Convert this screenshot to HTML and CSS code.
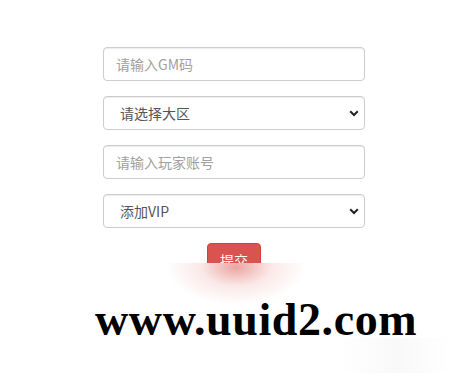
FILE: index.html
```html
<!DOCTYPE html>
<html lang="zh-CN">
<head>
<meta charset="utf-8">
<title>GM</title>
<link rel="stylesheet" href="styles.css">
</head>
<body>
<form class="gm-form">
  <input class="form-control" type="text" placeholder="请输入GM码">
  <div class="select-wrap">
    <select class="form-control select">
      <option>请选择大区</option>
    </select>
    <svg class="chev" width="10" height="7" viewBox="0 0 10 7"><path d="M1.2 1.3 L5 5 L8.8 1.3" fill="none" stroke="#222" stroke-width="2"/></svg>
  </div>
  <input class="form-control" type="text" placeholder="请输入玩家账号">
  <div class="select-wrap">
    <select class="form-control select">
      <option>添加VIP</option>
    </select>
    <svg class="chev" width="10" height="7" viewBox="0 0 10 7"><path d="M1.2 1.3 L5 5 L8.8 1.3" fill="none" stroke="#222" stroke-width="2"/></svg>
  </div>
  <div class="actions">
    <button type="button" class="btn-danger">提交</button>
  </div>
</form>
<div class="fade">
  <div class="watermark">www.uuid2.com</div>
</div>
</body>
</html>
```
FILE: styles.css
```css
html, body {
  margin: 0;
  padding: 0;
  background: #fff;
  width: 452px;
  height: 377px;
  overflow: hidden;
  position: relative;
  font-family: "Noto Sans CJK SC", "Noto Sans", sans-serif;
}

.gm-form {
  display: flex;
  flex-direction: column;
  gap: 15px;
  width: 262px;
  margin-left: 103px;
  padding-top: 47px;
}

.form-control {
  box-sizing: border-box;
  display: block;
  width: 100%;
  height: 34px;
  margin: 0;
  padding: 6px 12px;
  font-family: "Noto Sans CJK SC", "Noto Sans", sans-serif;
  font-size: 14px;
  line-height: 20px;
  color: #555;
  background: #fff;
  border: 1px solid #ccc;
  border-radius: 4px;
  box-shadow: inset 0 1px 1px rgba(0,0,0,.075);
  outline: none;
}

.form-control::placeholder {
  color: #a0a0a0;
}

.select-wrap {
  position: relative;
}

.select {
  appearance: none;
  -webkit-appearance: none;
  padding-left: 16px;
  color: #555;
}

.chev {
  position: absolute;
  right: 6px;
  top: 14px;
  pointer-events: none;
}

.actions {
  display: flex;
  justify-content: center;
}

.btn-danger {
  box-sizing: border-box;
  height: 34px;
  padding: 6px 12px;
  font-family: "Noto Sans CJK SC", "Noto Sans", sans-serif;
  font-size: 14px;
  line-height: 20px;
  color: #fff;
  background: #d9534f;
  border: 1px solid #d43f3a;
  border-radius: 4px;
}

.fade {
  position: absolute;
  left: 0;
  top: 263px;
  width: 452px;
  height: 114px;
  background:
    radial-gradient(ellipse 70px 38px at 236px 4px, rgba(222,105,100,.6), rgba(240,180,178,.3) 50%, rgba(255,255,255,0) 100%),
    linear-gradient(to right, rgba(255,255,255,0) 75%, rgba(246,246,246,.7) 88%, rgba(255,255,255,0) 100%) 0 75px / 100% 35px no-repeat,
    #fff;
}

.watermark {
  padding-left: 95px;
  padding-top: 32px;
  font-family: "Liberation Serif", "Times New Roman", serif;
  font-weight: bold;
  font-size: 46px;
  line-height: 50px;
  color: #000;
  letter-spacing: 0.6px;
}
```
